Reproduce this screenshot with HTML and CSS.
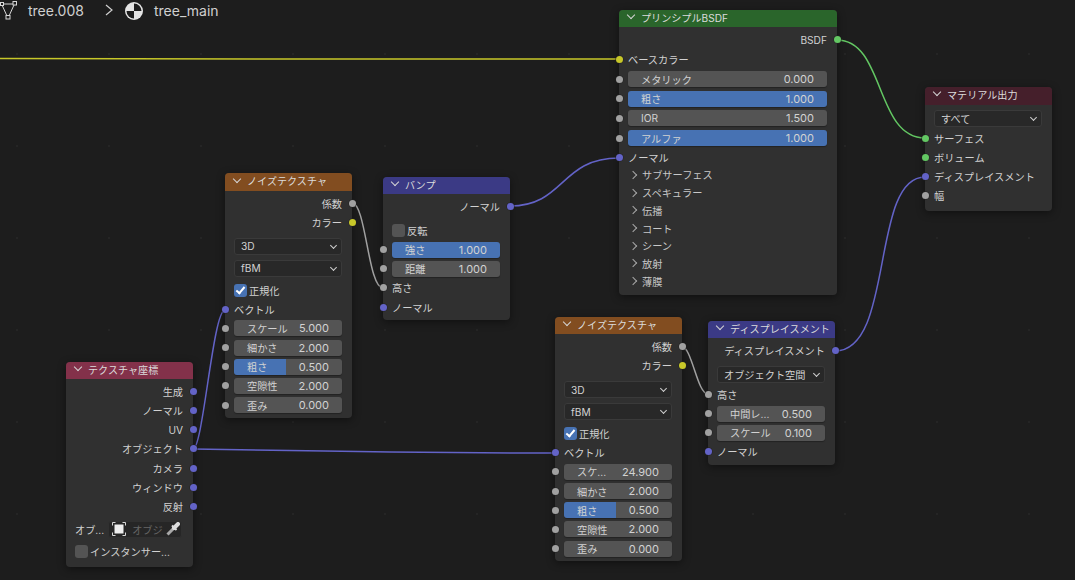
FILE: index.html
```html
<!DOCTYPE html>
<html lang="ja">

<head>
    <meta charset="UTF-8">
    <title>tree_main</title>
    <link rel="stylesheet" href="styles.css">
</head>

<body>
    <div id="editor">

        <!-- Breadcrumb -->
        <div class="crumbs">
            <svg class="crumb-icon" width="20" height="20" viewBox="0 0 20 20">
                <path class="mesh" d="M3 4 H13 M2 5 L7 16 M14 5 L9 16" />
                <rect class="mesh" x="0.5" y="2.5" width="3" height="3" />
                <rect class="mesh" x="13" y="1.5" width="3.5" height="3.5" />
                <rect class="mesh" x="6" y="15.5" width="4" height="3.5" />
            </svg>
            <span class="crumb-name crumb-mesh">tree.008</span>
            <svg class="crumb-arrow" width="8" height="12" viewBox="0 0 8 12">
                <path d="M1 1 L7 6 L1 11" />
            </svg>
            <svg class="crumb-ball" width="18" height="18" viewBox="0 0 18 18">
                <circle cx="9" cy="9" r="9" fill="#e4e4e4" />
                <path d="M9 1.5 A7.5 7.5 0 0 1 16.5 9 H9 Z" fill="#1d1d1d" />
                <path d="M9 16.5 A7.5 7.5 0 0 1 1.5 9 H9 Z" fill="#1d1d1d" />
            </svg>
            <span class="crumb-name">tree_main</span>
        </div>

        <!-- Links between sockets -->
        <svg id="wires" width="1075" height="580" viewBox="0 0 1075 580">
            <path class="wire yellow" d="M0 58.5 L300 59 L619 59" />
            <path class="wire green" d="M837 40 C 885 40, 875 138, 925 138" />
            <path class="wire purple" d="M510 206 C 565 206, 560 158, 619 158" />
            <path class="wire purple" d="M835 351 C 895 351, 870 177, 925 177" />
            <path class="wire grey" d="M352 203 C 366 203, 368 288, 383 288" />
            <path class="wire grey" d="M681 346 C 692 346, 697 394, 708 394" />
            <path class="wire purple" d="M193 449 C 203 449, 213 310, 225 310" />
            <path class="wire purple" d="M193 449 C 300 451, 450 453, 555 453" />
        </svg>

        <!-- Principled BSDF -->
        <div class="node node-bsdf">
            <div class="node-head head-green"><span class="chev"></span>プリンシプルBSDF</div>
            <div class="node-body">
                <div class="row out">BSDF<i class="sock s-green"></i></div>
                <div class="row in"><i class="sock s-yellow"></i>ベースカラー</div>
                <div class="row in"><i class="sock"></i><div class="slider"><span>メタリック</span><span>0.000</span></div></div>
                <div class="row in"><i class="sock"></i><div class="slider full"><span>粗さ</span><span>1.000</span></div></div>
                <div class="row in"><i class="sock"></i><div class="slider"><span>IOR</span><span>1.500</span></div></div>
                <div class="row in"><i class="sock"></i><div class="slider full"><span>アルファ</span><span>1.000</span></div></div>
                <div class="row in"><i class="sock s-purple"></i>ノーマル</div>
                <div class="panels">
                    <div class="panel"><span class="fold"></span>サブサーフェス</div>
                    <div class="panel"><span class="fold"></span>スペキュラー</div>
                    <div class="panel"><span class="fold"></span>伝播</div>
                    <div class="panel"><span class="fold"></span>コート</div>
                    <div class="panel"><span class="fold"></span>シーン</div>
                    <div class="panel"><span class="fold"></span>放射</div>
                    <div class="panel"><span class="fold"></span>薄膜</div>
                </div>
            </div>
        </div>

        <!-- Material output -->
        <div class="node node-output">
            <div class="node-head head-wine"><span class="chev"></span>マテリアル出力</div>
            <div class="node-body">
                <div class="select">すべて</div>
                <div class="row in"><i class="sock s-green"></i>サーフェス</div>
                <div class="row in"><i class="sock s-green"></i>ボリューム</div>
                <div class="row in"><i class="sock s-purple"></i>ディスプレイスメント</div>
                <div class="row in"><i class="sock"></i>幅</div>
            </div>
        </div>

        <!-- Noise texture (upper) -->
        <div class="node node-noise-a">
            <div class="node-head head-brown"><span class="chev"></span>ノイズテクスチャ</div>
            <div class="node-body">
                <div class="row out">係数<i class="sock"></i></div>
                <div class="row out">カラー<i class="sock s-yellow"></i></div>
                <div class="select first">3D</div>
                <div class="select">fBM</div>
                <div class="check-row"><span class="check on"></span>正規化</div>
                <div class="row in"><i class="sock s-purple"></i>ベクトル</div>
                <div class="row in"><i class="sock"></i><div class="slider"><span>スケール</span><span>5.000</span></div></div>
                <div class="row in"><i class="sock"></i><div class="slider"><span>細かさ</span><span>2.000</span></div></div>
                <div class="row in"><i class="sock"></i><div class="slider half"><span>粗さ</span><span>0.500</span></div></div>
                <div class="row in"><i class="sock"></i><div class="slider"><span>空隙性</span><span>2.000</span></div></div>
                <div class="row in"><i class="sock"></i><div class="slider"><span>歪み</span><span>0.000</span></div></div>
            </div>
        </div>

        <!-- Bump -->
        <div class="node node-bump">
            <div class="node-head head-indigo"><span class="chev"></span>バンプ</div>
            <div class="node-body">
                <div class="row out">ノーマル<i class="sock s-purple"></i></div>
                <div class="check-row first"><span class="check"></span>反転</div>
                <div class="row in"><i class="sock"></i><div class="slider full"><span>強さ</span><span>1.000</span></div></div>
                <div class="row in"><i class="sock"></i><div class="slider"><span>距離</span><span>1.000</span></div></div>
                <div class="row in"><i class="sock"></i>高さ</div>
                <div class="row in"><i class="sock s-purple"></i>ノーマル</div>
            </div>
        </div>

        <!-- Texture coordinate -->
        <div class="node node-coord">
            <div class="node-head head-rose"><span class="chev"></span>テクスチャ座標</div>
            <div class="node-body">
                <div class="row out">生成<i class="sock s-purple"></i></div>
                <div class="row out">ノーマル<i class="sock s-purple"></i></div>
                <div class="row out">UV<i class="sock s-purple"></i></div>
                <div class="row out">オブジェクト<i class="sock s-purple"></i></div>
                <div class="row out">カメラ<i class="sock s-purple"></i></div>
                <div class="row out">ウィンドウ<i class="sock s-purple"></i></div>
                <div class="row out">反射<i class="sock s-purple"></i></div>
                <div class="object-row">
                    <span>オブ...</span>
                    <div class="object-field">
                        <svg width="14" height="14" viewBox="0 0 14 14">
                            <path class="obj-frame" d="M0.5 3.5 V0.5 H3.5 M10.5 0.5 H13.5 V3.5 M13.5 10.5 V13.5 H10.5 M3.5 13.5 H0.5 V10.5" />
                            <rect x="2.5" y="2.5" width="9" height="9" fill="#eee" />
                        </svg>
                        <span class="placeholder">オブジ</span>
                        <svg class="dropper" width="14" height="14" viewBox="0 0 14 14">
                            <path d="M1.5 12.5 L8 6" fill="none" stroke="#a8a8a8" stroke-width="3" />
                            <path d="M8 6 L12 2" fill="none" stroke="#ddd" stroke-width="4" stroke-linecap="round" />
                            <path d="M6 3.5 L10.5 8" fill="none" stroke="#ddd" stroke-width="2" />
                        </svg>
                    </div>
                </div>
                <div class="check-row last"><span class="check"></span>インスタンサー...</div>
            </div>
        </div>

        <!-- Noise texture (lower) -->
        <div class="node node-noise-b">
            <div class="node-head head-brown"><span class="chev"></span>ノイズテクスチャ</div>
            <div class="node-body">
                <div class="row out">係数<i class="sock"></i></div>
                <div class="row out">カラー<i class="sock s-yellow"></i></div>
                <div class="select first">3D</div>
                <div class="select">fBM</div>
                <div class="check-row"><span class="check on"></span>正規化</div>
                <div class="row in"><i class="sock s-purple"></i>ベクトル</div>
                <div class="row in"><i class="sock"></i><div class="slider"><span>スケ...</span><span>24.900</span></div></div>
                <div class="row in"><i class="sock"></i><div class="slider"><span>細かさ</span><span>2.000</span></div></div>
                <div class="row in"><i class="sock"></i><div class="slider half"><span>粗さ</span><span>0.500</span></div></div>
                <div class="row in"><i class="sock"></i><div class="slider"><span>空隙性</span><span>2.000</span></div></div>
                <div class="row in"><i class="sock"></i><div class="slider"><span>歪み</span><span>0.000</span></div></div>
            </div>
        </div>

        <!-- Displacement -->
        <div class="node node-disp">
            <div class="node-head head-indigo"><span class="chev"></span>ディスプレイスメント</div>
            <div class="node-body">
                <div class="row out">ディスプレイスメント<i class="sock s-purple"></i></div>
                <div class="select first">オブジェクト空間</div>
                <div class="row in"><i class="sock"></i>高さ</div>
                <div class="row in"><i class="sock"></i><div class="slider"><span>中間レ...</span><span>0.500</span></div></div>
                <div class="row in"><i class="sock"></i><div class="slider"><span>スケール</span><span>0.100</span></div></div>
                <div class="row in"><i class="sock s-purple"></i>ノーマル</div>
            </div>
        </div>

    </div>
</body>

</html>
```

FILE: styles.css
```css
html,
body {
    margin: 0;
    padding: 0;
    background: #1d1d1d;
}

#editor {
    position: relative;
    width: 1075px;
    height: 580px;
    overflow: hidden;
    background-color: #1d1d1d;
    background-image: radial-gradient(circle, #252525 0.8px, transparent 1.2px);
    background-size: 92px 92px;
    background-position: -29px 8px;
    font-family: "Inter", "Noto Sans CJK JP", sans-serif;
    font-size: 10.2px;
    color: #d2d2d2;
}

/* Breadcrumb at the top of the editor */
.crumbs {
    position: absolute;
    left: 0;
    top: 0;
    display: flex;
    align-items: center;
    height: 20px;
    font-size: 14px;
    color: #d0d0d0;
}

.crumb-name {
    margin-left: 11px;
}

.crumb-mesh {
    margin-left: 8px;
}

.crumb-arrow {
    margin-left: 21px;
}

.crumb-ball {
    margin-left: 12px;
    margin-top: 1px;
}

.mesh {
    fill: none;
    stroke: #d8d8d8;
    stroke-width: 1;
}

.crumb-arrow path {
    fill: none;
    stroke: #cfcfcf;
    stroke-width: 1.2;
}

/* Links */
#wires {
    position: absolute;
    left: 0;
    top: 0;
}

.wire {
    fill: none;
    stroke-width: 1.5;
}

.yellow {
    stroke: #c7c729;
}

.green {
    stroke: #63c763;
}

.purple {
    stroke: #6363c7;
}

.grey {
    stroke: #a1a1a1;
}

/* Nodes */
.node {
    position: absolute;
    width: 127px;
    border-radius: 4px;
    background: #303030;
    box-shadow: 0 2px 8px rgba(0, 0, 0, 0.45);
}

.node-bsdf {
    left: 619px;
    top: 10px;
    width: 218px;
    height: 285px;
}

.node-output {
    left: 925px;
    top: 87px;
    height: 124px;
}

.node-noise-a {
    left: 225px;
    top: 173px;
    height: 245px;
}

.node-bump {
    left: 383px;
    top: 177px;
    height: 143px;
}

.node-coord {
    left: 66px;
    top: 362px;
    height: 205px;
}

.node-noise-b {
    left: 555px;
    top: 317px;
    height: 244px;
}

.node-disp {
    left: 708px;
    top: 321px;
    height: 144px;
}

.node-head {
    display: flex;
    align-items: center;
    box-sizing: border-box;
    height: 17px;
    padding: 0 0 3px 9px;
    border-radius: 4px 4px 0 0;
    font-size: 10.1px;
    color: #dcdcdc;
    white-space: nowrap;
}

.node-output .node-head,
.node-noise-a .node-head {
    height: 18px;
}

.node-output .node-head {
    padding-bottom: 4px;
}

.head-green {
    background: #2a652b;
}

.head-wine {
    background: #451f2b;
}

.head-brown {
    background: #824d20;
}

.head-indigo {
    background: #3b3a85;
}

.head-rose {
    background: #83314a;
}

/* Collapse arrow in the header */
.chev {
    width: 5px;
    height: 5px;
    margin: -4px 7px 0 0;
    border-right: 1px solid #d5d5d5;
    border-bottom: 1px solid #d5d5d5;
    transform: rotate(45deg);
}

.node-body {
    padding-top: 3px;
}

.node-noise-a .node-body {
    padding-top: 2.5px;
}

.node-output .node-body {
    padding-top: 5px;
}

.row {
    position: relative;
    display: flex;
    align-items: center;
    height: 19.15px;
    padding: 0 10px 0 9px;
    white-space: nowrap;
}

.node-bsdf .row {
    height: 19.67px;
}

.node-disp .row {
    height: 19px;
}

.row.out {
    justify-content: flex-end;
}

/* Sockets sit across the node edge */
.sock {
    position: absolute;
    width: 7px;
    height: 7px;
    border-radius: 50%;
    background: #a1a1a1;
    box-shadow: 0 0 0 0.5px #222;
}

.row.in .sock {
    left: -3.5px;
}

.row.out .sock {
    right: -3.5px;
}

.s-green {
    background: #63c763;
}

.s-yellow {
    background: #c7c729;
}

.s-purple {
    background: #6363c7;
}

.slider {
    display: flex;
    flex: 1;
    align-items: center;
    justify-content: space-between;
    height: 16px;
    padding: 0 13px;
    border-radius: 3px;
    background: #545454;
    box-shadow: 0 1px 1px rgba(0, 0, 0, 0.3);
}

.slider span:last-child {
    font-size: 11px;
}

.slider.full {
    background: #4772b3;
}

.slider.half {
    background: linear-gradient(to right, #4772b3 48%, #545454 48%);
}

.select {
    position: relative;
    display: flex;
    align-items: center;
    box-sizing: border-box;
    height: 17px;
    margin: 0 10px 5px 9px;
    padding-left: 6px;
    border: 1px solid #3a3a3a;
    border-radius: 3px;
    background: #282828;
}

.select.first {
    margin-top: 6px;
}

.node-disp .select {
    margin-bottom: 2px;
}

.node-output .select {
    margin-bottom: 2px;
}

.select::after {
    content: "";
    position: absolute;
    right: 5px;
    top: 4px;
    width: 4px;
    height: 4px;
    border-right: 1px solid #d0d0d0;
    border-bottom: 1px solid #d0d0d0;
    transform: rotate(45deg);
}

.check-row {
    display: flex;
    align-items: center;
    height: 19px;
    margin-top: -1px;
    padding: 0 9px;
    white-space: nowrap;
}

.check-row.first {
    margin-top: 5px;
}

.check-row.last {
    margin-top: 4.5px;
}

.check {
    position: relative;
    box-sizing: border-box;
    width: 13px;
    height: 13px;
    margin-right: 2px;
    border-radius: 3px;
    background: #545454;
}

.check.on {
    background: #4772b3;
}

.check.on::after {
    content: "";
    position: absolute;
    left: 4px;
    top: 1px;
    width: 3px;
    height: 7px;
    border-right: 2px solid #fff;
    border-bottom: 2px solid #fff;
    transform: rotate(40deg);
}

.panels {
    margin-top: -1.5px;
}

.panel {
    display: flex;
    align-items: center;
    height: 17.7px;
    padding-left: 11px;
    color: #c8c8c8;
}

.fold {
    width: 5px;
    height: 5px;
    margin-right: 6px;
    border-top: 1px solid #a8a8a8;
    border-right: 1px solid #a8a8a8;
    transform: rotate(45deg);
}

/* Object picker in the texture coordinate node */
.object-row {
    display: flex;
    align-items: center;
    gap: 4px;
    margin-top: 5px;
    padding: 0 11px 0 9px;
    white-space: nowrap;
}

.object-field {
    display: flex;
    flex: 1;
    align-items: center;
    height: 15px;
    padding: 0 1px 0 3px;
    border: 1px solid #303030;
    border-radius: 3px;
    background: #262626;
}

.obj-frame {
    fill: none;
    stroke: #d8d8d8;
    stroke-width: 1;
}

.placeholder {
    flex: 1;
    margin-left: 6px;
    color: #666;
}
```
